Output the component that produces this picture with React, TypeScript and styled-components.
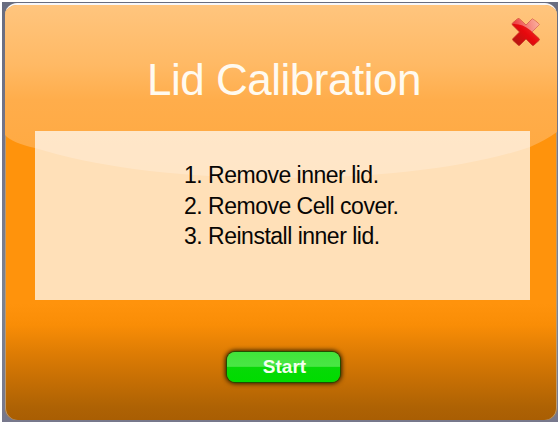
import React from "react";
import styled, { createGlobalStyle } from "styled-components";

const GlobalStyle = createGlobalStyle`
  * { box-sizing: border-box; }
  body { margin: 0; background: #fff; font-family: "Liberation Sans", Arial, sans-serif; }
`;

const Backdrop = styled.main`
  width: 560px;
  height: 424px;
  padding: 1px 1px 2px 3px;
  border: 2px solid #fff;
  background: linear-gradient(#686d80, #74758a 35%, #7c8290 70%, #77788c);
  background-clip: padding-box;
`;

const Dialog = styled.section`
  position: relative;
  display: flex;
  flex-direction: column;
  height: 417px;
  overflow: hidden;
  border-radius: 12px;
  border-top: 2px solid #f7f7fa;
  background: linear-gradient(#ff930c 0, #ff930c 299px, #f98d06 320px, #df7d04 347px, #c66f04 375px, #ae6204 402px, #a95e03 100%);
  box-shadow: inset 1px 0 #b99c75, inset -1px 0 #b99c75;
`;

const Gloss = styled.svg`
  position: absolute;
  inset: 0;
`;

const Title = styled.h1`
  position: relative;
  margin: 50px 0 0 6px;
  height: 76px;
  font-size: 44px;
  letter-spacing: -0.47px;
  line-height: 50px;
  font-weight: 400;
  text-align: center;
  color: #fffaf0;
  white-space: nowrap;
`;

const Panel = styled.div`
  position: relative;
  width: 495px;
  height: 169px;
  margin-left: 30px;
  padding: 29px 0 0 149px;
  background: rgba(255, 255, 255, 0.71);
`;

const Steps = styled.ol`
  margin: 0;
  padding: 0;
  list-style: none;
  font-size: 23px;
  letter-spacing: -0.5px;
  line-height: 30.6px;
  color: #080604;
`;

const Close = styled.button`
  position: absolute;
  top: 12px;
  right: 15px;
  width: 32px;
  height: 32px;
  padding: 0;
  border: 0;
  background: none;
`;

const Start = styled.button`
  position: relative;
  margin: 52px 0 0 222px;
  width: 113px;
  height: 30px;
  padding: 0 0 0 2px;
  border: 0;
  border-radius: 8px;
  color: #f4fff0;
  font: 700 19px/30px "Liberation Sans", Arial, sans-serif;
  background: linear-gradient(#40e43a 0, #49e645 48%, #07d907 50%, #00dc00 100%);
  box-shadow: 0 0 0 1px #234d00, 0 0 4px 2px #352000;
`;

const steps = ["Remove inner lid.", "Remove Cell cover.", "Reinstall inner lid."];

const CROSS = "M2.5 8 Q1.5 7 2.5 6 L7.5 2 Q8.5 1 9.5 2 L16 8 L21.5 2.5 Q22.5 1.5 23.5 2.5 L28.5 6.5 Q29.5 7.5 28.5 8.5 L22 15 L29 21.5 Q30 22.5 29 23.5 L24 28 Q23 29 22 28 L16 22 L10 28 Q9 29 8 28 L3 23.5 Q2 22.5 3 21.5 L9.5 15 Z";

function CloseIcon() {
  return (
    <svg width="32" height="32" viewBox="0 0 32 32">
      <defs>
        <linearGradient id="cross" x1="0" y1="1" x2="1" y2="0">
          <stop offset="0" stopColor="#a71c12" />
          <stop offset=".48" stopColor="#e8080d" />
          <stop offset="1" stopColor="#f44737" />
        </linearGradient>
        <linearGradient id="shine" x1="0" y1="0" x2="1" y2="0">
          <stop offset="0" stopColor="#fff" stopOpacity=".15" />
          <stop offset="1" stopColor="#ffe5ce" stopOpacity=".72" />
        </linearGradient>
        <clipPath id="crossClip"><path d={CROSS} /></clipPath>
      </defs>
      <path d={CROSS} fill="url(#cross)" stroke="#c93624" strokeWidth=".8" />
      <path d="M0 0H32V18Q25 18 20 13Q12 6 2 7Z" fill="url(#shine)" clipPath="url(#crossClip)" />
    </svg>
  );
}

export default function App() {
  return (
    <>
      <GlobalStyle />
      <Backdrop>
        <Dialog>
          <Gloss width="552" height="174" viewBox="0 0 552 174">
            <defs>
              <linearGradient id="gloss" x1="0" y1="0" x2="0" y2="1">
                <stop offset="0" stopColor="#ffc57e" />
                <stop offset=".35" stopColor="#ffb964" />
                <stop offset=".55" stopColor="#ffad4b" />
                <stop offset="1" stopColor="#ffa83e" />
              </linearGradient>
            </defs>
            <path d="M0 0H552V127Q541 135 525 142C465 162 380 173 275 173C180 173 95 163 30 143Q7 138 0 130Z" fill="url(#gloss)" />
          </Gloss>
          <Title>Lid Calibration</Title>
          <Panel>
            <Steps>
              {steps.map((step, i) => <li key={step}>{i + 1}. {step}</li>)}
            </Steps>
          </Panel>
          <Start>Start</Start>
          <Close aria-label="Close"><CloseIcon /></Close>
        </Dialog>
      </Backdrop>
    </>
  );
}
